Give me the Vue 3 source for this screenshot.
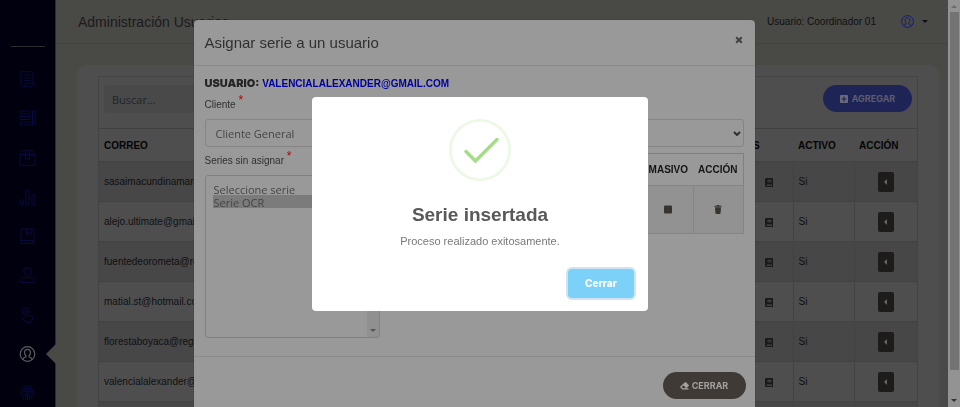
<script setup>
import { ref } from 'vue'

const search = ref('')
const client = ref('Cliente General')
const series = ref(['Serie OCR'])

const users = [
  'sasaimacundinamarca@gmail.com',
  'alejo.ultimate@gmail.com',
  'fuentedeorometa@regional.com',
  'matial.st@hotmail.com',
  'florestaboyaca@regional.com',
  'valencialalexander@gmail.com'
]

const nav = [
  { label: 'Reportes', paths: ['M1.500 14V.7h12v12M1.500 14c.3 1.300 1.300 1.300 2 1.300h9.500c2 0 2.400-1 2.400-2.600H5.500c0 1.600-.6 2.600-2 2.600', 'M4 4h7M4 6.800h7M4 9.600h7'] },
  { label: 'Formularios', paths: ['M.6 1h10v3H.6zM.6 6.500h10v3H.6zM.6 12h10v3H.6zM13 1h2.500v14H13z'] },
  { label: 'Paquetes', paths: ['M.6 4.500h14.800v10.900H.6zM.6 4.500l3-3.800h8.800l3 3.800M6 4.500l.6-3.800M10 4.500L9.400.7M6 4.500v4.500h4V4.500'] },
  { label: 'Gráficas', paths: ['M.8 11h3v4.400h-3zM6.500 1h3v14.400h-3zM12.400 6h3v9.400h-3z'] },
  { label: 'Series', paths: ['M1.500 1h13v14.400h-13zM1.500 12.600h13M7 1v5.500l2.200-1.800l2.300 1.800V1'] },
  { label: 'Perfiles', paths: ['M8 .6a3.900 3.900 0 1 1 0 7.800a3.900 3.900 0 1 1 0-7.800zM1.200 15.400v-1.600c0-2.500 2.300-3.500 4.600-3.700q2.200 1 4.400 0c2.300.2 4.600 1.200 4.600 3.700v1.600z'] },
  { label: 'Accesos', paths: ['M3.800 7.200a3.800 3.800 0 1 1 5.600-.6', 'M5.500 10V4c0-1.600 2.200-1.600 2.200 0v4l4.300 1c1 .2 1.300 1 1 2l-1 4.400H6.500L3 11.500c-.6-1.500 1-2.500 2.500-.5'] },
  { label: 'Usuarios', active: true, paths: ['M8 .7a7.300 7.300 0 1 1 0 14.600a7.300 7.300 0 1 1 0-14.600z', 'M8 3.300c2 0 3 1.400 3 3.300S9.600 10 9.600 10v1c2 .4 2.800 1 2.800 2.500M8 3.300c-2 0-3 1.400-3 3.300S6.400 10 6.400 10v1c-2 .4-2.800 1-2.800 2.500'] },
  { label: 'Huellas', paths: ['M3 2.500q5-3.500 10 0M1 6.500q7-7 14 0M.8 9.500C2.500 3.500 13.500 3.500 15.200 9.500M2 13c0-9 12-9 12-1M4 14.500c0-8.500 8-8.500 8-1M6 15.400c0-8 4-8 4-1M8 9.500v6'] }
]
</script>

<template>
  <div class="page">
    <nav class="sidebar" aria-label="Principal">
      <hr />
      <a v-for="n in nav" :key="n.label" href="#" :class="{ active: n.active }" :aria-label="n.label">
        <svg viewBox="0 0 16 16"><path v-for="p in n.paths" :key="p" :d="p" /></svg>
      </a>
    </nav>

    <div class="main">
      <header class="topbar">
        <h1>Administración Usuarios</h1>
        <span class="who">Usuario: Coordinador 01</span>
        <button class="account" aria-label="Cuenta">
          <svg class="avatar" viewBox="0 0 16 16"><path v-for="p in nav[7].paths" :key="p" :d="p" /></svg>
          <svg class="caret" viewBox="0 0 6 3"><path d="M0 0h6L3 3z" /></svg>
        </button>
      </header>

      <section class="card">
        <div class="panel">
          <div class="toolbar">
            <input v-model="search" type="text" placeholder="Buscar..." aria-label="Buscar" />
            <button class="add">
              <svg viewBox="0 0 8 8"><path fill-rule="evenodd" d="M1 0h6q1 0 1 1v6q0 1-1 1H1Q0 8 0 7V1Q0 0 1 0zM3.400 1.500v1.900H1.500v1.200h1.900v1.900h1.200V4.600h1.900V3.400H4.600V1.500z" /></svg>
              AGREGAR
            </button>
          </div>
          <table class="users">
            <thead>
              <tr><th>CORREO</th><th class="c-series">SERIES</th><th class="c-active">ACTIVO</th><th class="c-action">ACCIÓN</th></tr>
            </thead>
            <tbody>
              <tr v-for="u in users" :key="u">
                <td>{{ u }}</td>
                <td class="book">
                  <svg viewBox="0 0 8 9"><path fill-rule="evenodd" d="M1.500 0H8v9H1.500Q0 9 0 7.500v-6Q0 0 1.500 0zM2.500 1.800v2.400h4V1.800zM1.500 6.500v1.200H7V6.500z" /><path d="M2.500 2.700h4v.7h-4z" /></svg>
                </td>
                <td>Si</td>
                <td class="act">
                  <button aria-label="Acciones"><svg viewBox="0 0 3 6"><path d="M3 0v6L0 3z" /></svg></button>
                </td>
              </tr>
              <tr><td></td><td></td><td></td><td></td></tr>
            </tbody>
          </table>
        </div>
      </section>
    </div>

    <div class="scroll" aria-hidden="true">
      <svg viewBox="0 0 6 3"><path d="M0 3h6L3 0z" /></svg>
      <div class="thumb"></div>
      <svg class="down" viewBox="0 0 6 3"><path d="M0 0h6L3 3z" /></svg>
    </div>

    <div class="modal-layer">
      <div class="modal" role="dialog" aria-labelledby="modal-title">
        <div class="modal-head">
          <h2 id="modal-title">Asignar serie a un usuario</h2>
          <button aria-label="Cerrar ventana"><svg viewBox="0 0 8 8"><path d="M1.200 1.200l5.600 5.600M6.800 1.200L1.200 6.800" /></svg></button>
        </div>
        <div class="modal-body">
          <p class="user"><b>USUARIO:</b> <strong>VALENCIALALEXANDER@GMAIL.COM</strong></p>
          <label for="client">Cliente <sup>*</sup></label>
          <div class="select">
            <select id="client" v-model="client"><option>Cliente General</option></select>
            <svg viewBox="0 0 8 5"><path d="M1 1l3 3l3-3" /></svg>
          </div>
          <div class="columns">
            <div>
              <label for="series">Series sin asignar <sup>*</sup></label>
              <div class="listbox">
                <select id="series" v-model="series" multiple>
                  <option>Seleccione serie</option>
                  <option>Serie OCR</option>
                </select>
                <div class="list-scroll"><svg viewBox="0 0 6 3"><path d="M0 0h6L3 3z" /></svg></div>
              </div>
            </div>
            <table class="assigned">
              <thead><tr><th></th><th class="narrow">MASIVO</th><th class="narrow">ACCIÓN</th></tr></thead>
              <tbody>
                <tr>
                  <td></td>
                  <td class="mid"><svg viewBox="0 0 8 8"><rect width="8" height="8" rx="1" /></svg></td>
                  <td class="mid"><svg viewBox="0 0 8 9"><path d="M.3.700h2.200L3 0h2l.5.700h2.200v1H.3zM1 2.300h6L6.600 8q0 1-1 1H2.400q-1 0-1-1z" /></svg></td>
                </tr>
              </tbody>
            </table>
          </div>
        </div>
        <div class="modal-foot">
          <button>
            <svg viewBox="0 0 10 9"><path fill-rule="evenodd" d="M5.500.300q.6-.6 1.200 0l3 3q.6.600 0 1.200L7 7h2.500v1.400h-7L.4 6.300q-.6-.6 0-1.200zM3.700 4L1.800 5.700L3.200 7h1.900l1.300-1.200z" /></svg>
            CERRAR
          </button>
        </div>
      </div>
    </div>

    <div class="alert-layer">
      <div class="alert" role="alertdialog" aria-labelledby="alert-title">
        <svg class="check" viewBox="0 0 62 62">
          <circle cx="31" cy="31" r="29.600" />
          <path d="M17 32.500L26.500 42L48 20.500" />
        </svg>
        <h3 id="alert-title">Serie insertada</h3>
        <p>Proceso realizado exitosamente.</p>
        <button>Cerrar</button>
      </div>
    </div>
  </div>
</template>

<style>
body { background: #494946; }
</style>

<style scoped>
* { box-sizing: border-box; }
.page { display: flex; height: 100vh; overflow: hidden; font: 10px/16px "Liberation Sans", Arial, sans-serif; color: #101010; background: #494946; }
h1, h2, h3, p { margin: 0; font-weight: 400; }
button { border: 0; padding: 0; cursor: pointer; }
svg { display: block; }

.sidebar { flex: 0 0 56px; display: flex; flex-direction: column; justify-content: space-between; align-items: center; padding: 46px 0 6px; background: #00000f; border-right: 1px solid #2c2c30; }
.sidebar hr { width: 34px; margin: 0 0 1px; border: 0; border-top: 1px solid #2c2c31; }
.sidebar a { position: relative; width: 100%; display: flex; justify-content: center; }
.sidebar svg { width: 17px; height: 16px; fill: none; stroke: #080b3c; stroke-width: 1; }
.sidebar .active svg { stroke: #5c5c5c; stroke-width: 1.200; }
.sidebar .active::after { content: ""; position: absolute; right: -1px; top: -2px; border: 10px solid transparent; border-left: 0; border-right-color: #494946; }

.main { flex: 1; min-width: 0; }
.topbar { display: flex; align-items: center; height: 44px; padding: 0 20px 0 22px; border-bottom: 1px solid #424240; }
.topbar h1 { flex: 1; font-size: 14px; color: #1b1b1b; }
.account { display: flex; align-items: center; gap: 8px; margin-left: 25px; background: none; }
.avatar { width: 13px; height: 13px; fill: none; stroke: #181d6c; stroke-width: 1.200; }
.caret { width: 6px; height: 3px; fill: #101010; }

.card { margin: 21px 9px 0 21px; padding: 11px 21px; border-radius: 10px; background: #4e4e4e; }
.panel { border: 1px solid #434343; }
.toolbar { display: flex; justify-content: space-between; align-items: flex-start; padding: 8px 5px 15px; }
.toolbar input { width: 160px; height: 28px; padding: 0 8px; border: 0; border-radius: 3px; background: #494949; font: 11px "Open Sans", sans-serif; color: #222; }
.toolbar input::placeholder { color: #222527; }
.add { display: flex; align-items: center; justify-content: center; gap: 4px; width: 89px; height: 27px; border-radius: 14px; background: #1f2456; color: #5b5d72; font: 700 9px Inter, sans-serif; }
.add svg { width: 8px; height: 8px; fill: #6a6b78; }

.users { width: 100%; border-collapse: collapse; table-layout: fixed; }
.users th { height: 33px; padding: 2px 5px 0; border-top: 1px solid #404040; text-align: left; color: #050505; }
.users td { height: 40px; padding: 1px 5px 0; border-top: 1px solid #424242; border-right: 1px solid #424242; }
.users td:last-child { border-right: 0; }
.users tbody tr:nth-child(odd) { background: #474747; }
.c-series { width: 75px; }
.c-active { width: 61px; }
.c-action { width: 63px; }
.book svg { width: 8px; height: 9px; margin-left: 41px; fill: #191919; }
.act button { display: flex; align-items: center; justify-content: center; width: 16px; height: 20px; margin: auto; border-radius: 2px; background: #1d1c1b; }
.act svg { width: 3px; height: 6px; fill: #656565; }

.scroll { flex: 0 0 12px; display: flex; flex-direction: column; align-items: center; padding: 5px 0 5px; background: #939393; }
.scroll svg { flex: none; width: 6px; height: 3px; fill: #6c6c6c; }
.scroll .down { margin-top: auto; fill: #333; }
.thumb { flex: 0 0 88vh; width: 9px; margin-top: 4px; background: #737373; }

.modal-layer { position: fixed; inset: 0 12px 0 0; display: flex; justify-content: center; align-items: flex-start; padding: 20px 16px 0; }
.modal { width: 100%; max-width: 561px; border-radius: 4px; background: #999; box-shadow: 0 0 1px #222; color: #303030; }
.modal-head { display: flex; align-items: center; justify-content: space-between; height: 46px; padding: 0 12px 0 11px; border-bottom: 1px solid #8a8a8a; }
.modal-head h2 { font-size: 15px; }
.modal-head button { background: none; }
.modal-head svg { width: 8px; height: 8px; margin-bottom: 6px; fill: none; stroke: #404040; stroke-width: 2; }
.modal-body { padding: 9px 11px 18px; border-bottom: 1px solid #8a8a8a; }
.user { margin-bottom: 5px; color: #252525; }
.user b { font: 900 11px/16px Inter, sans-serif; }
.user strong { color: #00009c; }
label { display: block; height: 16px; }
sup { line-height: 0; color: #b50000; font-size: 12px; }
.select { position: relative; margin-top: 6px; }
.select select { appearance: none; display: block; width: 100%; height: 28px; padding: 0 10px; border: 1px solid #858585; border-radius: 3px; background: none; color: #454545; font: 11px "Open Sans", sans-serif; }
.select svg { position: absolute; right: 3px; top: 12px; width: 8px; height: 5px; fill: none; stroke: #303030; stroke-width: 2; }
.columns { display: grid; grid-template-columns: 1fr 2fr; gap: 12px; align-items: start; padding-top: 6px; }
.listbox { display: flex; height: 163px; margin-top: 6px; border: 1px solid #808080; border-radius: 3px; overflow: hidden; }
.listbox select { flex: 1; min-width: 0; padding: 6px 0 0 7px; border: 0; outline: 0; overflow: hidden; background: none; color: #454545; font: 11px/13px "Open Sans", sans-serif; }
.listbox option { height: 13px; min-height: 13px; padding: 0 1px; color: #454545; }
.listbox option:checked { background: linear-gradient(#7b7b7b, #7b7b7b); }
.list-scroll { flex: 0 0 12px; display: flex; justify-content: center; align-items: flex-end; padding-bottom: 5px; background: #909090; }
.list-scroll svg { width: 6px; height: 3px; fill: #555; }
.assigned { width: 100%; border-collapse: collapse; border: 1px solid #808080; }
.assigned th { height: 32px; padding: 0 5px; text-align: left; color: #151515; }
.assigned td { height: 48px; padding: 0 5px; border: 1px solid #858585; background: #929292; }
.assigned .narrow { width: 49px; }
.mid svg { width: 8px; height: 9px; margin: auto; fill: #38342f; }
.modal-foot { display: flex; justify-content: flex-end; padding: 15px 9px 60px; }
.modal-foot button { display: flex; align-items: center; justify-content: center; gap: 3px; width: 83px; height: 27px; border-radius: 14px; background: #3f3a36; color: #a3a19f; font: 700 9px Inter, sans-serif; }
.modal-foot svg { width: 9px; height: 8px; fill: #a3a19f; }

.alert-layer { position: fixed; inset: 0; display: flex; align-items: center; justify-content: center; }
.alert { width: 35%; min-width: 260px; display: flex; flex-direction: column; align-items: center; padding: 22px 14px 13px; border-radius: 4px; background: #fff; text-align: center; }
.check { width: 62px; height: 62px; fill: none; }
.check circle { stroke: #edf8e7; stroke-width: 2.800; }
.check path { stroke: #a5dc86; stroke-width: 3.500; stroke-linecap: round; }
.alert h3 { margin-top: 22px; font-size: 19px; line-height: 24px; font-weight: 700; color: #595959; }
.alert p { margin-top: 6px; font-size: 11px; color: #797979; }
.alert button { align-self: flex-end; width: 66px; height: 29px; margin-top: 20px; border-radius: 4px; background: #7cd1f9; box-shadow: 0 0 0 2px #d0e3f1; color: #fff; font: 800 10px Inter, sans-serif; }
</style>
